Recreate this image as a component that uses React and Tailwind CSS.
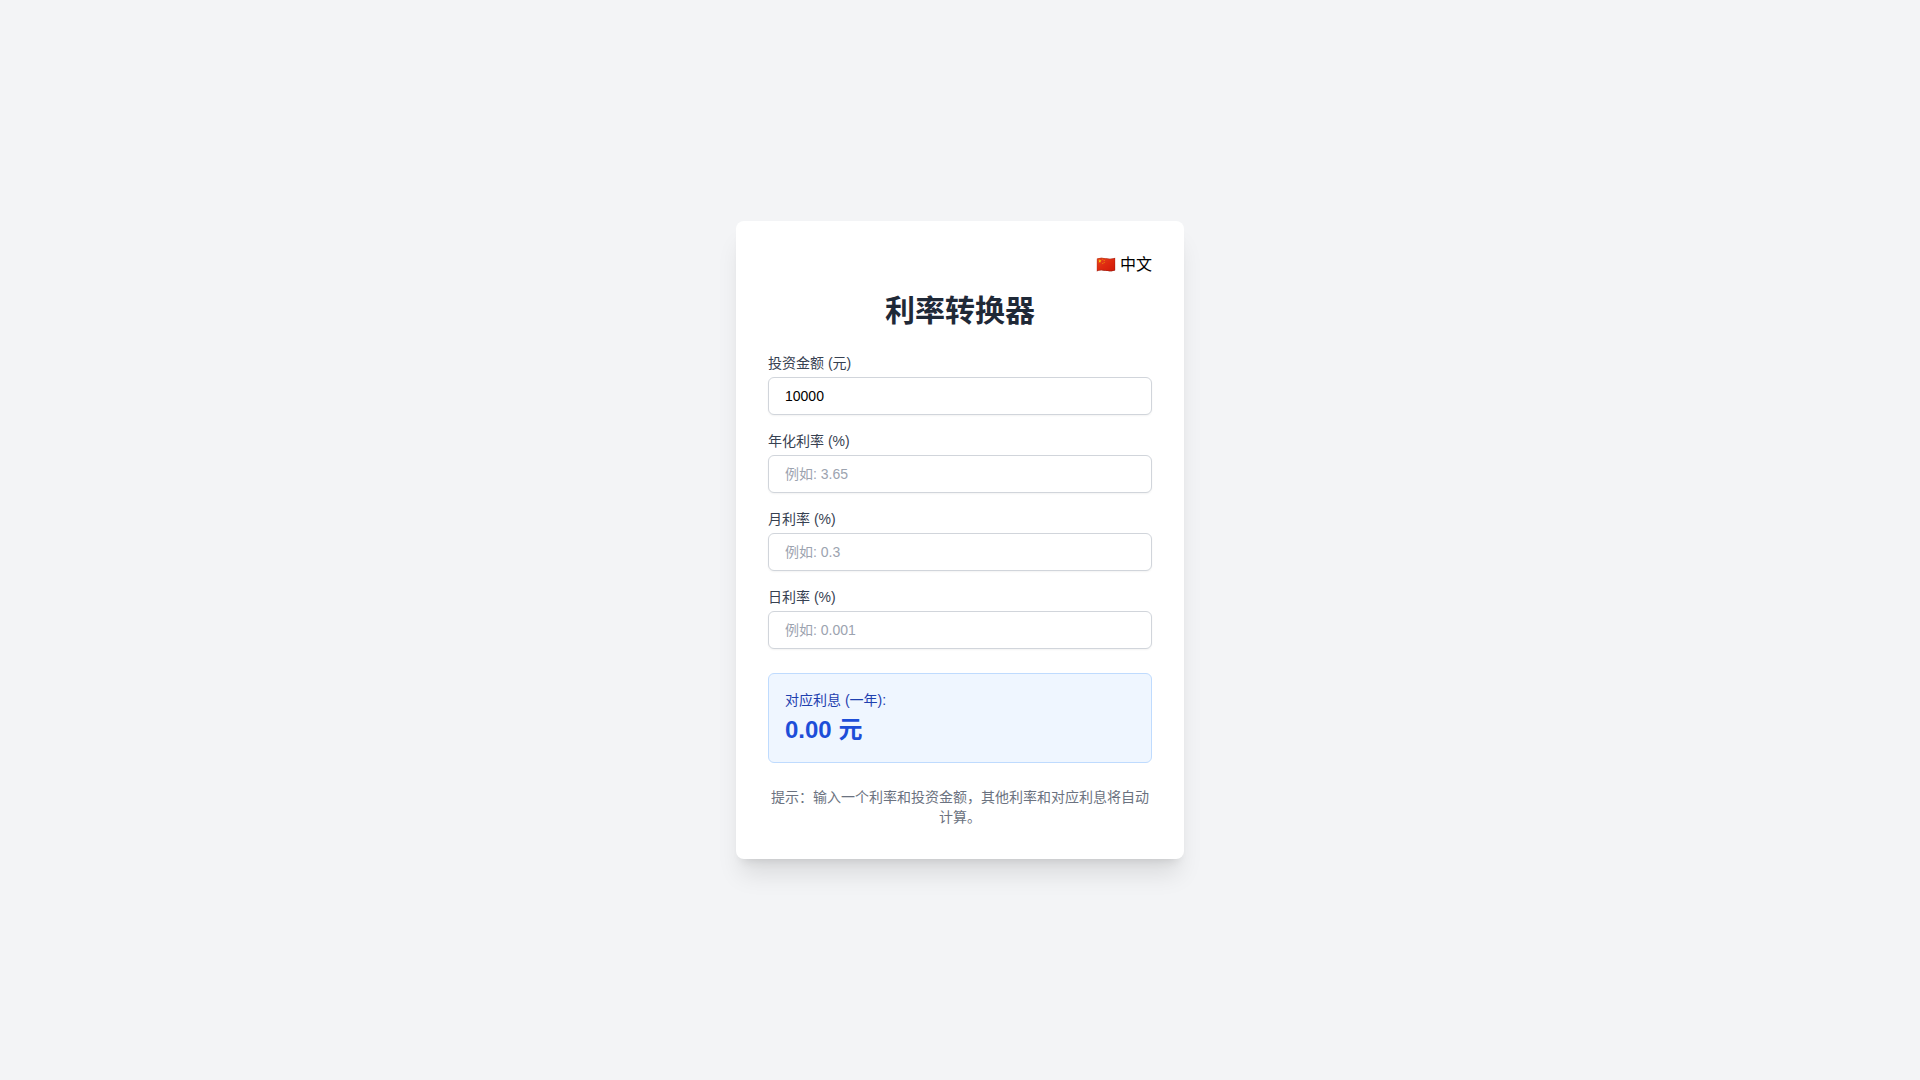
import { useState } from 'react'

const fields = [
  { id: 'annual', label: '年化利率 (%)', placeholder: '例如: 3.65' },
  { id: 'monthly', label: '月利率 (%)', placeholder: '例如: 0.3' },
  { id: 'daily', label: '日利率 (%)', placeholder: '例如: 0.001' }
]

// number of periods of each kind in a year
const periods = { annual: 1, monthly: 12, daily: 365 }

function Field({ id, label, value, placeholder, onChange }) {
  return (
    <div>
      <label htmlFor={id} className="block text-sm text-[#374151]">{label}</label>
      <input
        type="number"
        id={id}
        value={value}
        placeholder={placeholder}
        onChange={(e) => onChange(e.target.value)}
        className="mt-1 block w-full rounded-md border border-[#d1d5db] bg-white px-4 py-2 text-sm text-black shadow-xs placeholder:text-[#9ca3af] focus:border-blue-500 focus:outline-none"
      />
    </div>
  )
}

export default function App() {
  const [amount, setAmount] = useState('10000')
  const [rates, setRates] = useState({ annual: '', monthly: '', daily: '' })

  const handleRate = (id, value) => {
    if (value === '') {
      setRates({ annual: '', monthly: '', daily: '' })
      return
    }
    const annual = parseFloat(value) * periods[id]
    const next = {}
    for (const key of Object.keys(periods)) {
      next[key] = key === id ? value : (annual / periods[key]).toFixed(4)
    }
    setRates(next)
  }

  const interest = (parseFloat(amount) || 0) * (parseFloat(rates.annual) || 0) / 100

  return (
    <div className="flex min-h-screen items-center justify-center bg-[#f3f4f6] p-4 font-['Liberation_Sans','Noto_Sans_CJK_SC',sans-serif]">
      <div className="w-full max-w-md rounded-lg bg-white p-8 shadow-xl">
        <div className="mb-4 flex justify-end">
          <button type="button" className="text-base text-black">🇨🇳 中文</button>
        </div>
        <h1 className="mb-6 text-center text-3xl font-bold text-[#1f2937]">利率转换器</h1>

        <div className="space-y-4">
          <Field id="amount" label="投资金额 (元)" value={amount} onChange={setAmount} />
          {fields.map((f) => (
            <Field key={f.id} {...f} value={rates[f.id]} onChange={(v) => handleRate(f.id, v)} />
          ))}
        </div>

        <div className="mt-6 rounded-md border border-[#bfdbfe] bg-[#eff6ff] p-4">
          <p className="text-sm text-[#1e40af]">对应利息 (一年):</p>
          <p className="mt-1 text-2xl font-bold text-[#1d4ed8]">{interest.toFixed(2)} 元</p>
        </div>

        <p className="mt-6 text-center text-sm text-[#6b7280]">
          提示：输入一个利率和投资金额，其他利率和对应利息将自动计算。
        </p>
      </div>
    </div>
  )
}
